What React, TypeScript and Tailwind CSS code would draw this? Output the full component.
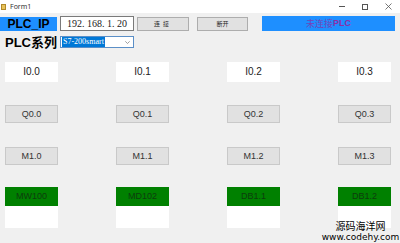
import React from 'react';

const inputs = ['I0.0', 'I0.1', 'I0.2', 'I0.3'];
const outputs = ['Q0.0', 'Q0.1', 'Q0.2', 'Q0.3'];
const markers = ['M1.0', 'M1.1', 'M1.2', 'M1.3'];
const words = ['MW100', 'MD102', 'DB1.1', 'DB1.2'];

const cjk = { fontFamily: '"Noto Sans CJK SC", "Noto Sans", sans-serif' };
const sans = { fontFamily: '"Liberation Sans", Arial, sans-serif' };

const App: React.FC = () => {
    return (
        <div className="relative w-[400px] h-[243px] overflow-hidden bg-[#f0f0f0]" style={sans}>
            {/* title bar */}
            <div className="h-[13px] bg-white flex items-center">
                <div className="ml-[1px] w-[5px] h-[6px] bg-[#e8c25a] border border-[#b08a2a]" />
                <span className="ml-[4px] text-[7px] leading-none text-[#333]" style={{ fontFamily: '"Noto Sans", sans-serif' }}>Form1</span>
                <div className="ml-auto flex items-center">
                    <span className="w-[24px] flex justify-center">
                        <span className="block w-[6px] h-px bg-[#555]" />
                    </span>
                    <span className="w-[22px] flex justify-center">
                        <span className="block w-[6px] h-[6px] border border-[#555]" />
                    </span>
                    <span className="w-[24px] flex justify-center">
                        <svg width="7" height="7" viewBox="0 0 7 7">
                            <path d="M0.5 0.5 L6.5 6.5 M6.5 0.5 L0.5 6.5" stroke="#555" strokeWidth="0.8" />
                        </svg>
                    </span>
                </div>
            </div>

            {/* connection row */}
            <div className="flex items-center pt-[3px]">
                <div className="w-[57px] h-[14px] bg-[#1e8fff] flex items-center justify-center text-[12px] font-bold text-black leading-none">
                    PLC_IP
                </div>
                <div className="ml-[3px] w-[74px] h-[15px] bg-white border border-[#7a7a7a] flex items-center justify-center text-[10px] leading-none text-[#222]" style={{ fontFamily: '"Liberation Serif", serif' }}>
                    192. 168. 1. 20
                </div>
                <button className="ml-[3px] w-[52px] h-[14px] bg-[#e1e1e1] border border-[#adadad] flex items-center justify-center text-[6px] leading-none text-[#222] tracking-[3px]" style={cjk}>
                    连接
                </button>
                <button className="ml-[8px] w-[51px] h-[14px] bg-[#e1e1e1] border border-[#adadad] flex items-center justify-center text-[6px] leading-none text-[#222]" style={cjk}>
                    断开
                </button>
                <div className="ml-[14px] w-[133px] h-[15px] bg-[#1e8fff] flex items-center justify-center text-[9px] leading-none text-[#8a2fa8]" style={cjk}>
                    <span className="opacity-80">未连接</span>
                    <span className="font-bold" style={sans}>PLC</span>
                </div>
            </div>

            {/* series row */}
            <div className="flex items-center mt-[4px] h-[15px]">
                <div className="w-[60px] pl-[5px] whitespace-nowrap text-[13px] font-bold leading-none text-black" style={{ fontFamily: '"Liberation Sans", "Noto Sans CJK SC", sans-serif' }}>
                    PLC系列
                </div>
                <div className="w-[74px] h-[12px] bg-white border border-[#5b8fc7] flex items-center self-start mt-[1px]">
                    <span className="ml-[1px] bg-[#0078d7] text-white text-[8px] leading-[10px] px-px" style={{ fontFamily: '"Liberation Serif", serif' }}>
                        S7-200smart
                    </span>
                    <svg className="ml-auto mr-[3px]" width="5" height="3" viewBox="0 0 5 3">
                        <path d="M0.3 0.3 L2.5 2.5 L4.7 0.3" fill="none" stroke="#777" strokeWidth="0.7" />
                    </svg>
                </div>
            </div>

            {/* io grid */}
            <div className="grid grid-cols-[repeat(4,53px)] gap-x-[58px] pl-[5px] mt-[12px]">
                {inputs.map((t) => (
                    <div key={t} className="h-[20px] bg-white flex items-center justify-center text-[10px] leading-none text-[#222]">
                        {t}
                    </div>
                ))}
            </div>
            <div className="grid grid-cols-[repeat(4,53px)] gap-x-[58px] pl-[5px] mt-[23px]">
                {outputs.map((t) => (
                    <div key={t} className="h-[18px] bg-[#e1e1e1] border border-[#c9c9c9] flex items-center justify-center text-[9px] leading-none text-[#333]">
                        {t}
                    </div>
                ))}
            </div>
            <div className="grid grid-cols-[repeat(4,53px)] gap-x-[58px] pl-[5px] mt-[24px]">
                {markers.map((t) => (
                    <div key={t} className="h-[18px] bg-[#e1e1e1] border border-[#c9c9c9] flex items-center justify-center text-[9px] leading-none text-[#333]">
                        {t}
                    </div>
                ))}
            </div>
            <div className="grid grid-cols-[repeat(4,53px)] gap-x-[58px] pl-[5px] mt-[22px]">
                {words.map((t) => (
                    <div key={t} className="flex flex-col">
                        <div className="h-[19px] bg-[#008000] flex items-center justify-center text-[9px] leading-none text-[#0d3d0d]">
                            {t}
                        </div>
                        <div className="h-[22px] bg-white" />
                    </div>
                ))}
            </div>

            {/* watermark */}
            <div className="absolute left-[322px] top-[219px] w-[77px] flex flex-col items-center text-black">
                <span className="block text-[10px] leading-[13px]" style={cjk}>源码海洋网</span>
                <span className="block text-[9px] leading-[10px]" style={{ fontFamily: '"DejaVu Sans", sans-serif' }}>www.codehy.com</span>
            </div>
        </div>
    );
};

export default App;
